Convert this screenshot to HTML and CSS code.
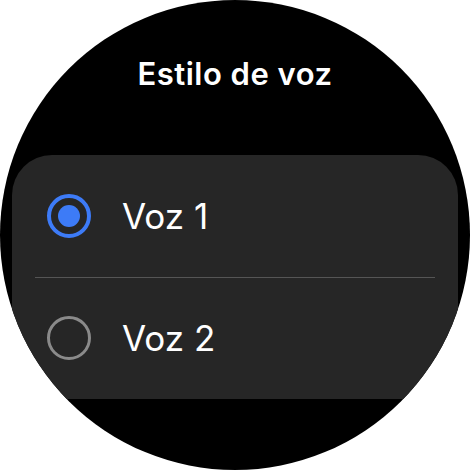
FILE: index.html
```html
<!DOCTYPE html>
<html lang="pt-br">
<head>
    <meta charset="UTF-8">
    <meta name="viewport" content="width=device-width, initial-scale=1.0">
    <title>Estilo de voz</title>
    <link rel="stylesheet" href="styles.css">
</head>
<body>
<div class="watch">
    <h1 class="title">Estilo de voz</h1>

    <!-- Lista de vozes -->
    <div class="card">
        <label class="option">
            <span class="radio radio-on"></span>
            <span class="option-label">Voz 1</span>
        </label>
        <div class="divider"></div>
        <label class="option">
            <span class="radio"></span>
            <span class="option-label">Voz 2</span>
        </label>
    </div>
</div>
</body>
</html>
```

FILE: styles.css
```css
body, html {
    margin: 0;
    height: 100%;
    background-color: #ffffff;
    font-family: Inter, "Noto Sans", sans-serif;
}

.watch {
    width: 470px;
    height: 470px;
    border-radius: 50%;
    background-color: #000000;
    overflow: hidden;
    display: flex;
    flex-direction: column;
}

.title {
    margin: 0;
    height: 155px;
    box-sizing: border-box;
    padding-top: 56px;
    text-align: center;
    font-size: 31px;
    font-weight: 600;
    letter-spacing: 0.5px;
    line-height: 36px;
    color: #ffffff;
}

.card {
    margin: 0 12px;
    height: 244px;
    background-color: #262626;
    border-radius: 40px 40px 0 0;
    display: flex;
    flex-direction: column;
}

.option {
    flex: 1;
    display: flex;
    align-items: center;
    gap: 31px;
    padding-left: 35px;
}

.divider {
    height: 1px;
    margin: 0 23px;
    background-color: #555555;
}

.radio {
    width: 44px;
    height: 44px;
    box-sizing: border-box;
    border-radius: 50%;
    border: 3px solid #8a8a8a;
    display: flex;
    align-items: center;
    justify-content: center;
}

.radio-on {
    border: 4px solid #3d7bf7;
}

/* Ponto interno do botão selecionado */
.radio-on::after {
    content: "";
    width: 22px;
    height: 22px;
    border-radius: 50%;
    background-color: #3d7bf7;
}

.option-label {
    font-size: 35px;
    font-weight: 400;
    color: #ffffff;
}
```
